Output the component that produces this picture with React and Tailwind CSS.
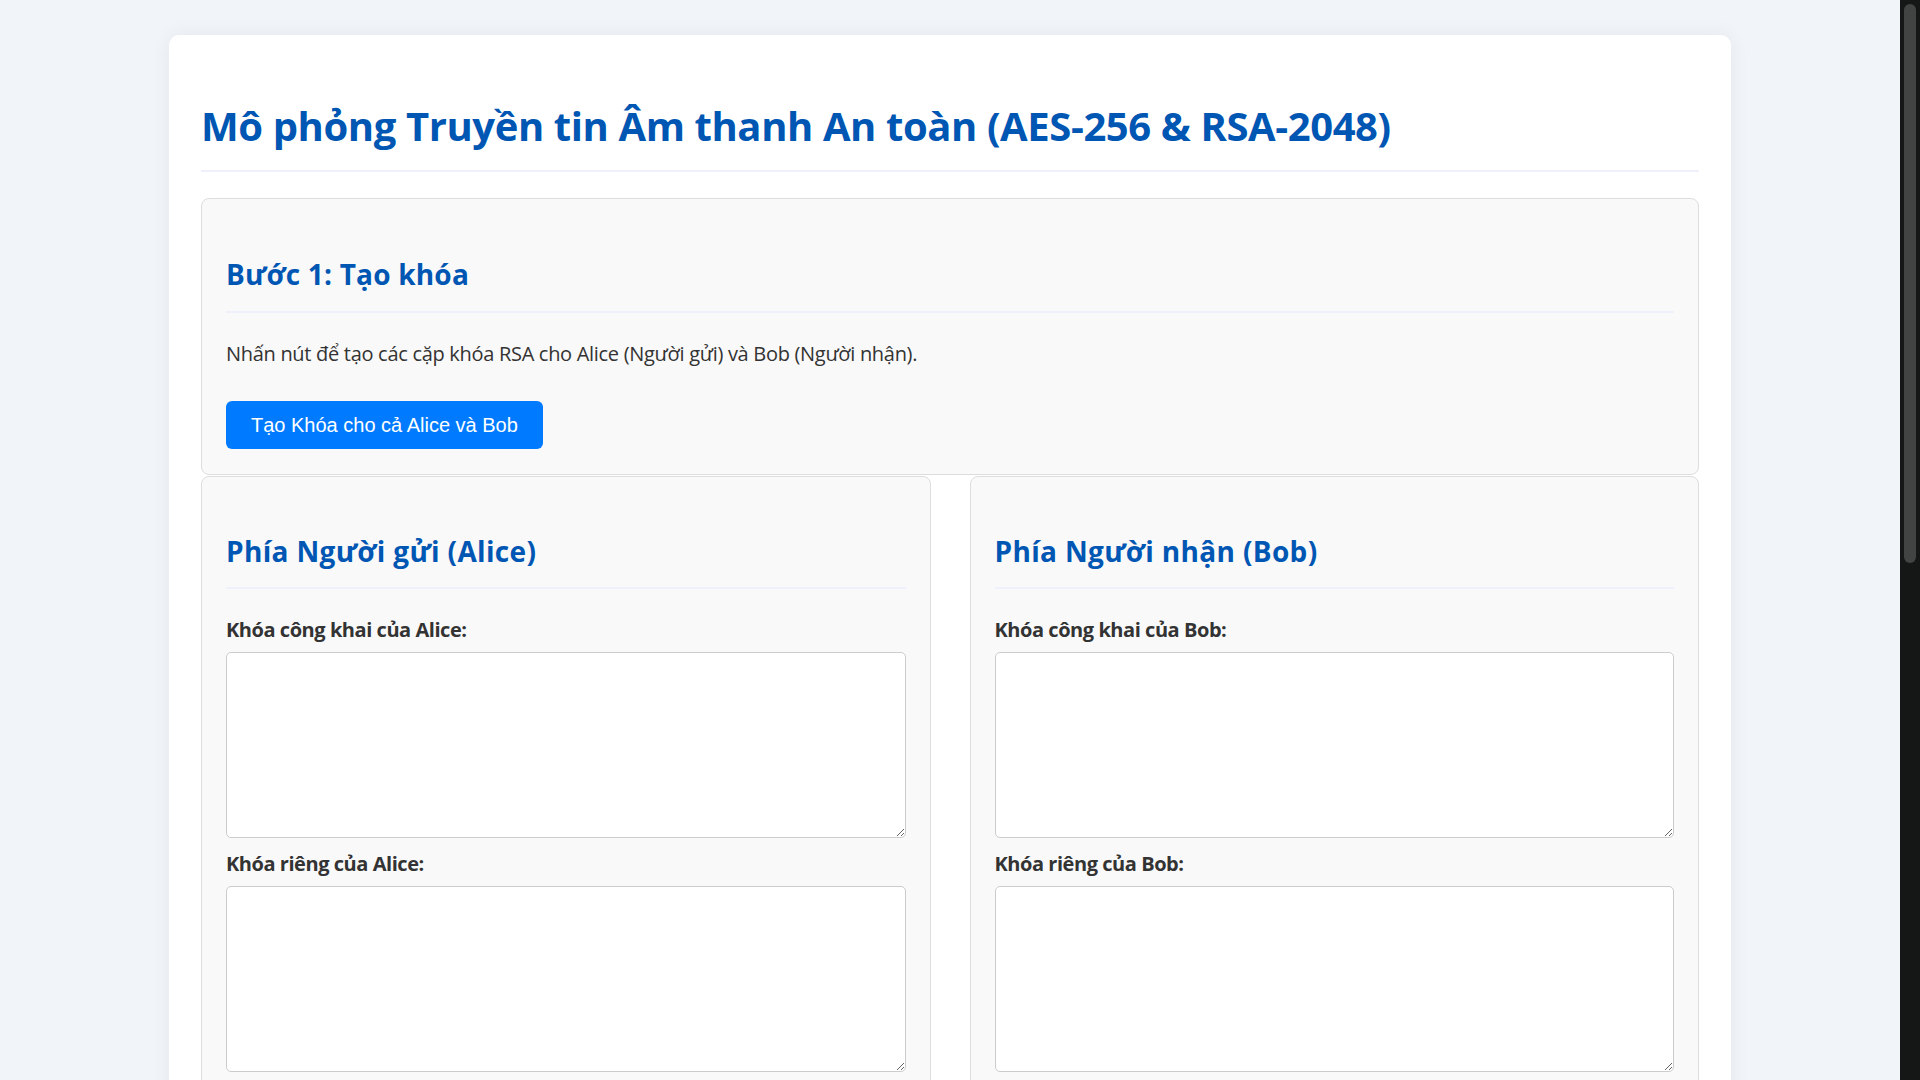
import React, { useState } from "react";

const font = { fontFamily: '"Open Sans", "Noto Sans", sans-serif' };

const KeyField = ({ label, value, onChange, first }) => (
  <>
    <label
      className={`block text-[20px] leading-[30px] font-bold tracking-[-0.45px] text-[#333] mb-[7px] ${
        first ? "mt-[26px]" : "mt-[11px]"
      }`}
    >
      {label}
    </label>
    <textarea
      value={value}
      onChange={onChange}
      readOnly
      className="block w-full h-[186px] bg-white border border-[#ccc] rounded-[5px] p-2 text-[16px] font-mono"
    />
  </>
);

const Party = ({ title, name, keys }) => (
  <section className="bg-[#f9f9f9] border border-[#ddd] rounded-[8px] px-[24px] pt-[56px] pb-[25px]">
    <h2 className="text-[28px] leading-[36px] font-bold tracking-[0.35px] text-[#0056b3] pb-[18px] border-b-2 border-[#eef0fb]">
      {title}
    </h2>
    <KeyField label={`Khóa công khai của ${name}:`} value={keys.pub} first />
    <KeyField label={`Khóa riêng của ${name}:`} value={keys.priv} />
  </section>
);

const App = () => {
  const [keys, setKeys] = useState({
    alice: { pub: "", priv: "" },
    bob: { pub: "", priv: "" },
  });

  const generateKeys = () => {
    setKeys({
      alice: { pub: "", priv: "" },
      bob: { pub: "", priv: "" },
    });
  };

  return (
    <div className="flex h-screen overflow-hidden bg-[#f1f4f8]" style={font}>
      <main className="flex-1">
        <div className="mx-auto mt-[35px] w-[1562px] bg-white rounded-[10px] shadow-[0_0_20px_rgba(0,0,0,0.06)] px-[32px] pt-[67px] pb-10">
          <h1 className="text-[40px] leading-[48px] font-bold tracking-[-0.4px] text-[#0056b3] pb-[20px] border-b-2 border-[#eef0fb] mb-[26px]">
            Mô phỏng Truyền tin Âm thanh An toàn (AES-256 &amp; RSA-2048)
          </h1>

          <section className="bg-[#f9f9f9] border border-[#ddd] rounded-[8px] px-[24px] pt-[57px] pb-[25px]">
            <h2 className="text-[28px] leading-[36px] font-bold tracking-[0.2px] text-[#0056b3] pb-[19px] border-b-2 border-[#eef0fb]">
              Bước 1: Tạo khóa
            </h2>
            <p className="mt-[26px] text-[20px] leading-[30px] tracking-[-0.3px] text-[#333]">
              Nhấn nút để tạo các cặp khóa RSA cho Alice (Người gửi) và Bob
              (Người nhận).
            </p>
            <button
              onClick={generateKeys}
              className="mt-[32px] h-[48px] px-[25px] bg-[#007bff] text-white rounded-[6px] text-[20px]"
              style={{ fontFamily: '"Liberation Sans", Arial, sans-serif' }}
            >
              Tạo Khóa cho cả Alice và Bob
            </button>
          </section>

          <div className="grid grid-cols-2 gap-[39px] mt-px">
            <Party title="Phía Người gửi (Alice)" name="Alice" keys={keys.alice} />
            <Party title="Phía Người nhận (Bob)" name="Bob" keys={keys.bob} />
          </div>
        </div>
      </main>
      <div className="w-[20px] bg-[#151716] px-[4px] pt-[4px]">
        <div className="h-[559px] rounded-full bg-[#424443]" />
      </div>
    </div>
  );
};

export default App;
